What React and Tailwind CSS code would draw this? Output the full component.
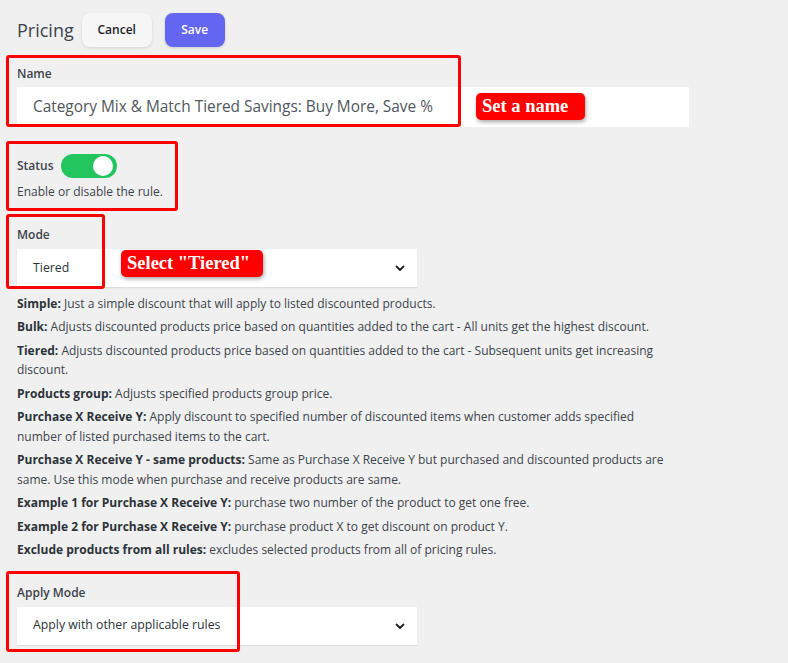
import React from "react";

const font = { fontFamily: '"Open Sans", "Noto Sans", sans-serif' };

const Chevron = () => (
  <svg width="12" height="12" viewBox="0 0 12 12" className="text-[#1d2327]">
    <path d="M2.5 4.5 6 8l3.5-3.5" fill="none" stroke="currentColor" strokeWidth="1.8" strokeLinecap="round" strokeLinejoin="round" />
  </svg>
);

const Select = ({ value }) => (
  <div className="flex h-[38px] w-[400px] items-center justify-between bg-white pl-4 pr-[11px] shadow-[0_1px_1px_rgba(0,0,0,0.08)]">
    <span className="text-[12.3px] text-[#2c3338]">{value}</span>
    <Chevron />
  </div>
);

const descriptions = [
  ["Simple:", "Just a simple discount that will apply to listed discounted products."],
  ["Bulk:", "Adjusts discounted products price based on quantities added to the cart - All units get the highest discount."],
  ["Tiered:", "Adjusts discounted products price based on quantities added to the cart - Subsequent units get increasing discount."],
  ["Products group:", "Adjusts specified products group price."],
  ["Purchase X Receive Y:", "Apply discount to specified number of discounted items when customer adds specified number of listed purchased items to the cart."],
  ["Purchase X Receive Y - same products:", "Same as Purchase X Receive Y but purchased and discounted products are same. Use this mode when purchase and receive products are same."],
  ["Example 1 for Purchase X Receive Y:", "purchase two number of the product to get one free."],
  ["Example 2 for Purchase X Receive Y:", "purchase product X to get discount on product Y."],
  ["Exclude products from all rules:", "excludes selected products from all of pricing rules."],
];

// red annotation frames drawn over the form
const frames = [
  "left-[6px] top-[55px] w-[455px] h-[72px]",
  "left-[6px] top-[141px] w-[172px] h-[70px]",
  "left-[6px] top-[214px] w-[99px] h-[75px]",
  "left-[6px] top-[571px] w-[234px] h-[81px]",
];

const Tag = ({ className, children }) => (
  <div
    className={`absolute flex items-center rounded-[5px] bg-[#ff0000] px-[6px] text-[18.5px] font-bold leading-none text-white shadow-[1px_2px_4px_rgba(0,0,0,0.35)] ${className}`}
    style={{ fontFamily: '"Liberation Serif", "DejaVu Serif", serif' }}
  >
    {children}
  </div>
);

export default function App() {
  return (
    <div className="relative min-h-[663px] w-full overflow-hidden bg-[#f0f0f1] px-[17px] pt-[13px] text-[#3c434a]" style={font}>
      {/* header */}
      <div className="flex items-center">
        <h1 className="text-[18px] font-normal text-[#3c434a]">Pricing</h1>
        <button className="ml-[8px] h-[34px] w-[70px] rounded-lg bg-[#f6f6f7] text-[12px] font-semibold text-[#1d2327] shadow-[0_1px_3px_rgba(0,0,0,0.12)]">
          Cancel
        </button>
        <button className="ml-[13px] h-[34px] w-[60px] rounded-lg bg-[#6366f1] text-[12px] font-semibold text-white shadow-[0_1px_3px_rgba(0,0,0,0.15)]">
          Save
        </button>
      </div>

      {/* name */}
      <div className="mt-[18px]">
        <div className="text-[12px] font-semibold text-[#3c434a]">Name</div>
        <div className="mt-[4px] flex h-[40px] w-[672px] items-center bg-white pl-4 text-[15.4px] text-[#50575e]">
          Category Mix &amp; Match Tiered Savings: Buy More, Save %
        </div>
      </div>

      {/* status */}
      <div className="mt-[27px]">
        <div className="flex items-center gap-[7px]">
          <span className="text-[12px] font-semibold text-[#3c434a]">Status</span>
          <div className="flex h-[24px] w-[56px] items-center justify-end rounded-full bg-[#22c55e] pr-[4px]">
            <div className="h-[20px] w-[20px] rounded-full bg-white" />
          </div>
        </div>
        <div className="mt-[5px] text-[12px] text-[#3c434a]">Enable or disable the rule.</div>
      </div>

      {/* mode */}
      <div className="mt-[25px]">
        <div className="text-[12px] font-semibold text-[#3c434a]">Mode</div>
        <div className="mt-[5px]">
          <Select value="Tiered" />
        </div>
        <div className="mt-[7px] w-[662px] text-[12px] leading-[19.6px] text-[#3c434a]">
          {descriptions.map(([b, t]) => (
            <p key={b} className="mb-[3.8px]">
              <b className="font-bold text-[#2c3338]">{b}</b> {t}
            </p>
          ))}
        </div>
      </div>

      {/* apply mode */}
      <div className="mt-[24px]">
        <div className="text-[12px] font-semibold text-[#3c434a]">Apply Mode</div>
        <div className="mt-[5px]">
          <Select value="Apply with other applicable rules" />
        </div>
      </div>

      {frames.map((f) => (
        <div key={f} className={`pointer-events-none absolute rounded-[3px] border-[3px] border-[#ff0000] ${f}`} />
      ))}
      <Tag className="left-[476px] top-[93px] h-[27px] w-[109px]">Set a name</Tag>
      <Tag className="left-[121px] top-[250px] h-[27px] w-[142px]">Select "Tiered"</Tag>
    </div>
  );
}
